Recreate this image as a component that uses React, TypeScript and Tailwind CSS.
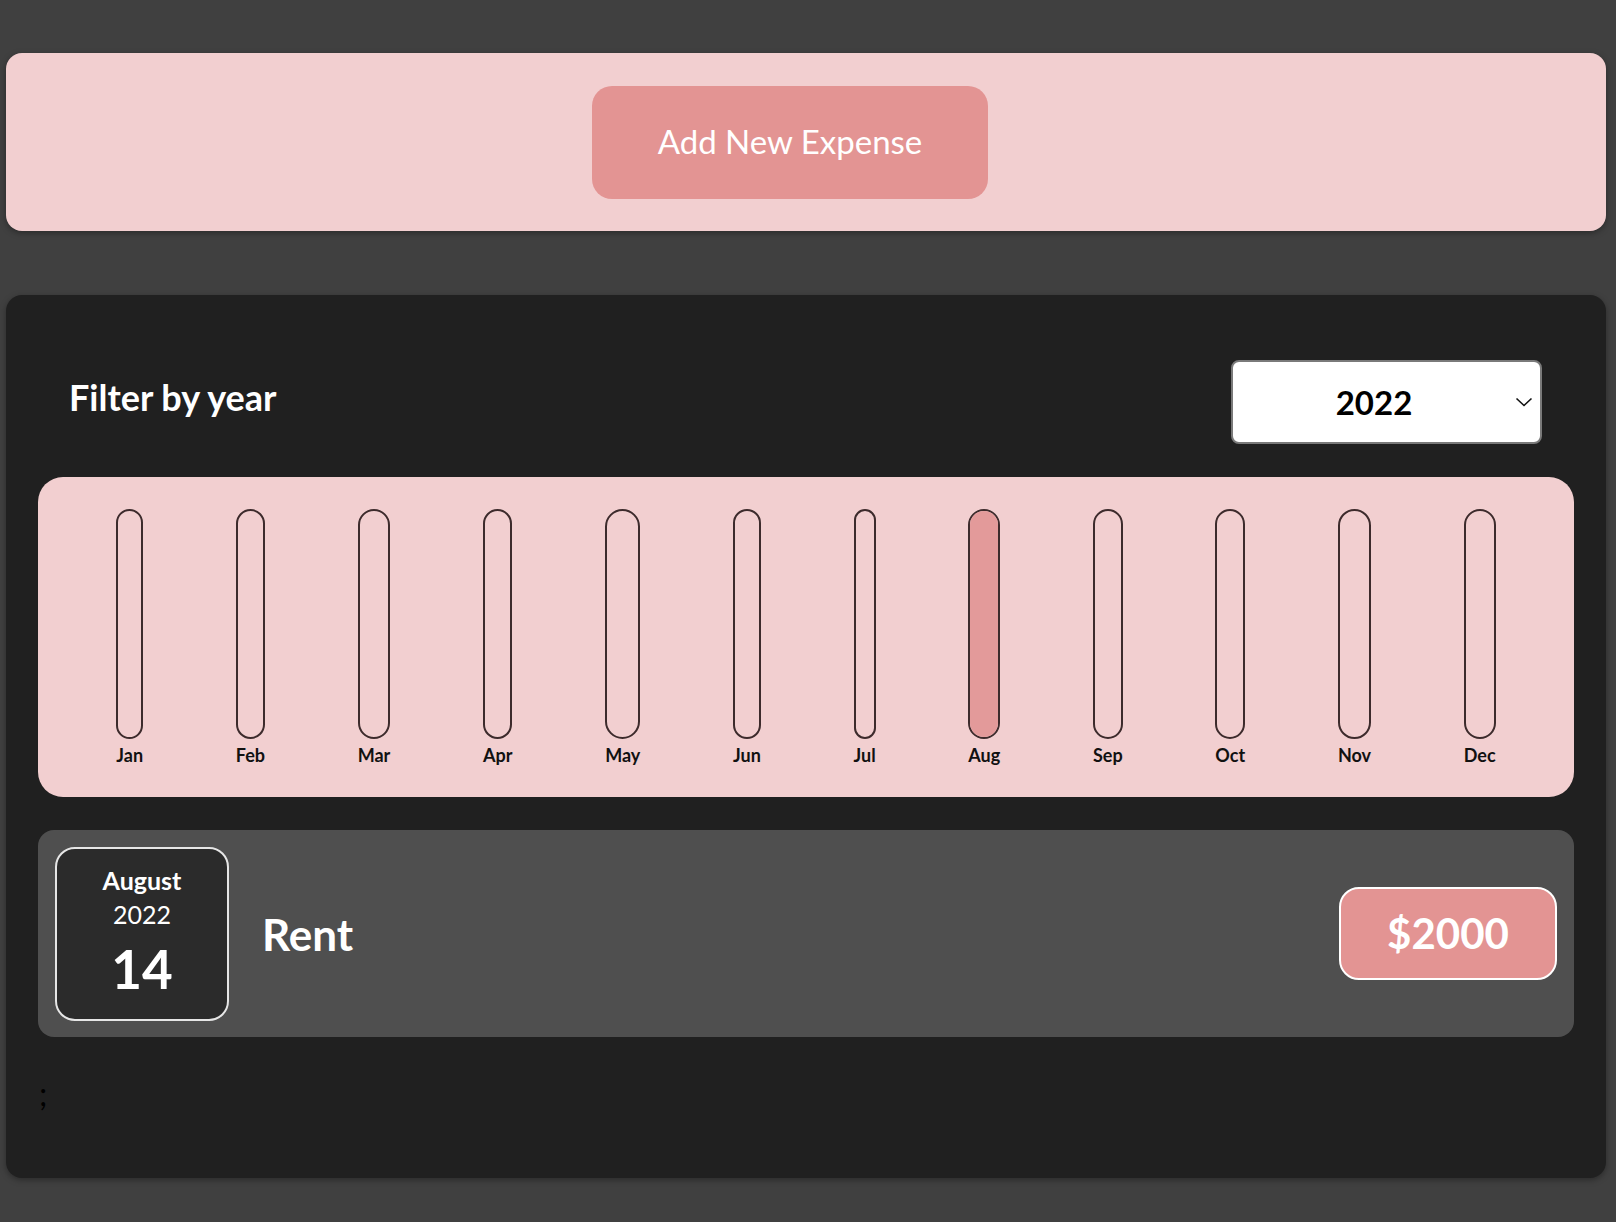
import React from "react";

const months = ["Jan", "Feb", "Mar", "Apr", "May", "Jun", "Jul", "Aug", "Sep", "Oct", "Nov", "Dec"];

const ChartBar = ({ label, fill }: { label: string; fill: number }) => {
  return (
    <div className="flex h-full flex-col items-center">
      <div className="flex h-full w-full flex-col justify-end overflow-hidden rounded-full border-2 border-[#3d2b2c] bg-[#f2cfd0]">
        <div className="w-full bg-[#e39a9a]" style={{ height: `${fill}%` }} />
      </div>
      <div className="pt-[5px] text-[18px] leading-[22px] font-bold text-[#111]">{label}</div>
    </div>
  );
};

export default function App() {
  const values = [0, 0, 0, 0, 0, 0, 0, 2000, 0, 0, 0, 0];
  const max = Math.max(...values);

  return (
    <div className="min-h-screen bg-[#404040] pt-[53px] pb-[44px] pl-[6px] pr-[10px] font-['Lato','Noto_Sans',sans-serif]">
      <div className="flex h-[178px] items-center justify-center rounded-2xl bg-[#f2cfd0] pr-8 shadow-[0_2px_6px_rgba(0,0,0,0.35)]">
        <button className="h-[113px] w-[396px] rounded-[20px] bg-[#e39493] text-[33px] text-white">
          Add New Expense
        </button>
      </div>

      <div className="mt-16 h-[883px] rounded-2xl bg-[#202020] px-8 pt-[65px] shadow-[0_2px_6px_rgba(0,0,0,0.35)]">
        <div className="flex items-center justify-between pl-[31px] pr-8">
          <div className="-mt-[10px] text-[36px] font-bold text-white">Filter by year</div>
          <div className="flex h-[84px] w-[311px] items-center rounded-lg border-2 border-[#7a7a7a] bg-white">
            <div className="flex-1 pt-[2px] text-center text-[33px] font-bold text-black">2022</div>
            <svg width="18" height="10" viewBox="0 0 18 10" className="mr-[7px]">
              <path d="M1.5 1.5 L9 8.5 L16.5 1.5" fill="none" stroke="#111" strokeWidth="1.6" />
            </svg>
          </div>
        </div>

        <div className="mt-[33px] flex h-[320px] justify-around rounded-[25px] bg-[#f2cfd0] px-8 pt-8 pb-[31px]">
          {months.map((m, i) => (
            <ChartBar key={m} label={m} fill={max ? (values[i] / max) * 100 : 0} />
          ))}
        </div>

        <div className="mt-[33px] flex h-[207px] items-center rounded-2xl bg-[#4f4f4f] px-[17px]">
          <div className="flex h-[174px] w-[174px] flex-col items-center justify-center rounded-[20px] border-2 border-[#e6e6e6] bg-[#2b2b2b] text-white">
            <div className="text-[25px] leading-[30px] font-bold">August</div>
            <div className="text-[25px] leading-[38px]">2022</div>
            <div className="mt-[2px] text-[53px] leading-[68px] font-bold">14</div>
          </div>
          <div className="ml-[33px] text-[44px] font-bold text-white">Rent</div>
          <div className="ml-auto flex h-[93px] w-[218px] items-center justify-center rounded-[20px] border-2 border-white bg-[#e39493] text-[42px] font-bold text-white">
            $2000
          </div>
        </div>

        <div className="ml-[1px] mt-[41px] text-[32px] leading-none text-black">;</div>
      </div>
    </div>
  );
}
